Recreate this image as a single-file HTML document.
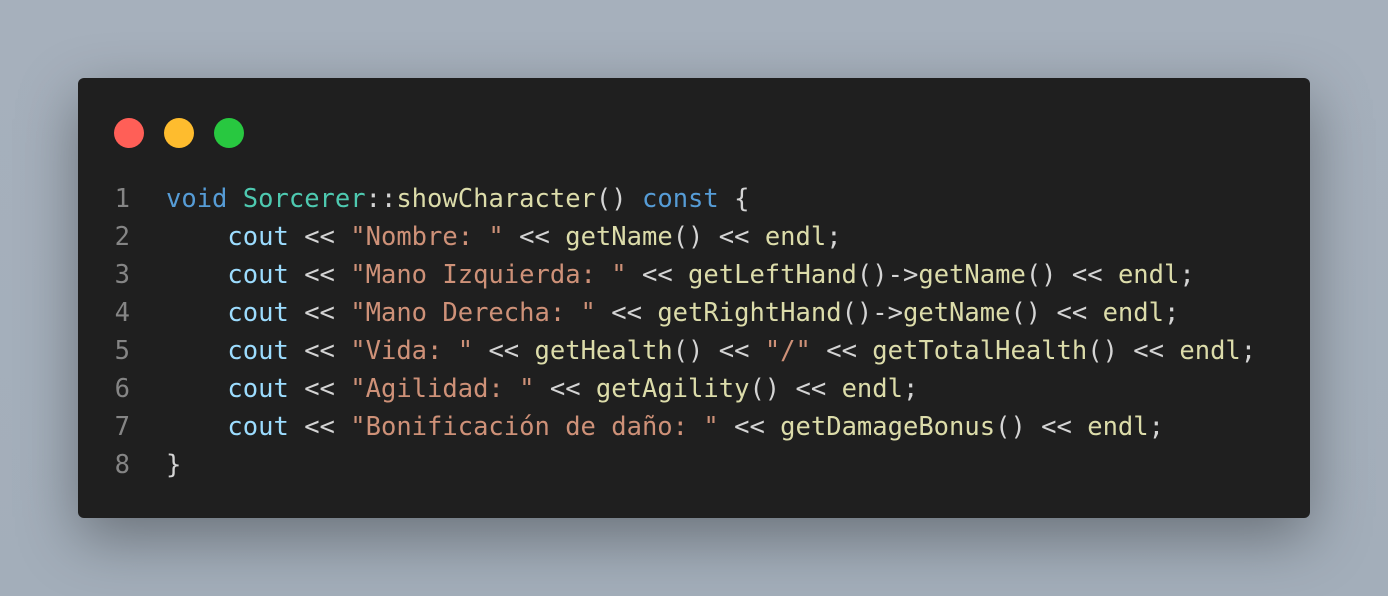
<!DOCTYPE html>
<html><head><meta charset="utf-8"><style>
html,body{margin:0;width:1388px;height:596px;overflow:hidden}
body{background:linear-gradient(180deg,#a6b0bc 0%,#a3aeba 100%);position:relative}
.card{position:absolute;left:78px;top:78px;width:1232px;height:440px;background:#1f1f1f;border-radius:6px;box-shadow:0 20px 60px rgba(0,0,0,.35)}
.dot{position:absolute;top:40px;width:30px;height:30px;border-radius:50%}
pre{position:absolute;left:0;top:102px;margin:0;font-family:"DejaVu Sans Mono","Liberation Mono",monospace;font-size:25.5px;line-height:38px;color:#d4d4d4}
.ln{display:inline-block;width:88px;text-align:right;color:#858585;box-sizing:border-box;padding-right:36px}
.k{color:#569cd6}.t{color:#4ec9b0}.f{color:#dcdcaa}.v{color:#9cdcfe}.s{color:#ce9178}
</style></head><body>
<div class="card">
<div class="dot" style="left:36px;background:#ff5f57"></div>
<div class="dot" style="left:86px;background:#febc2e"></div>
<div class="dot" style="left:136px;background:#28c840"></div>
<pre><span class="ln">1</span><span class="k">void</span> <span class="t">Sorcerer</span>::<span class="f">showCharacter</span>() <span class="k">const</span> {
<span class="ln">2</span>    <span class="v">cout</span> &lt;&lt; <span class="s">"Nombre: "</span> &lt;&lt; <span class="f">getName</span>() &lt;&lt; <span class="f">endl</span>;
<span class="ln">3</span>    <span class="v">cout</span> &lt;&lt; <span class="s">"Mano Izquierda: "</span> &lt;&lt; <span class="f">getLeftHand</span>()-&gt;<span class="f">getName</span>() &lt;&lt; <span class="f">endl</span>;
<span class="ln">4</span>    <span class="v">cout</span> &lt;&lt; <span class="s">"Mano Derecha: "</span> &lt;&lt; <span class="f">getRightHand</span>()-&gt;<span class="f">getName</span>() &lt;&lt; <span class="f">endl</span>;
<span class="ln">5</span>    <span class="v">cout</span> &lt;&lt; <span class="s">"Vida: "</span> &lt;&lt; <span class="f">getHealth</span>() &lt;&lt; <span class="s">"/"</span> &lt;&lt; <span class="f">getTotalHealth</span>() &lt;&lt; <span class="f">endl</span>;
<span class="ln">6</span>    <span class="v">cout</span> &lt;&lt; <span class="s">"Agilidad: "</span> &lt;&lt; <span class="f">getAgility</span>() &lt;&lt; <span class="f">endl</span>;
<span class="ln">7</span>    <span class="v">cout</span> &lt;&lt; <span class="s">"Bonificación de daño: "</span> &lt;&lt; <span class="f">getDamageBonus</span>() &lt;&lt; <span class="f">endl</span>;
<span class="ln">8</span>}</pre>
</div>
</body></html>
